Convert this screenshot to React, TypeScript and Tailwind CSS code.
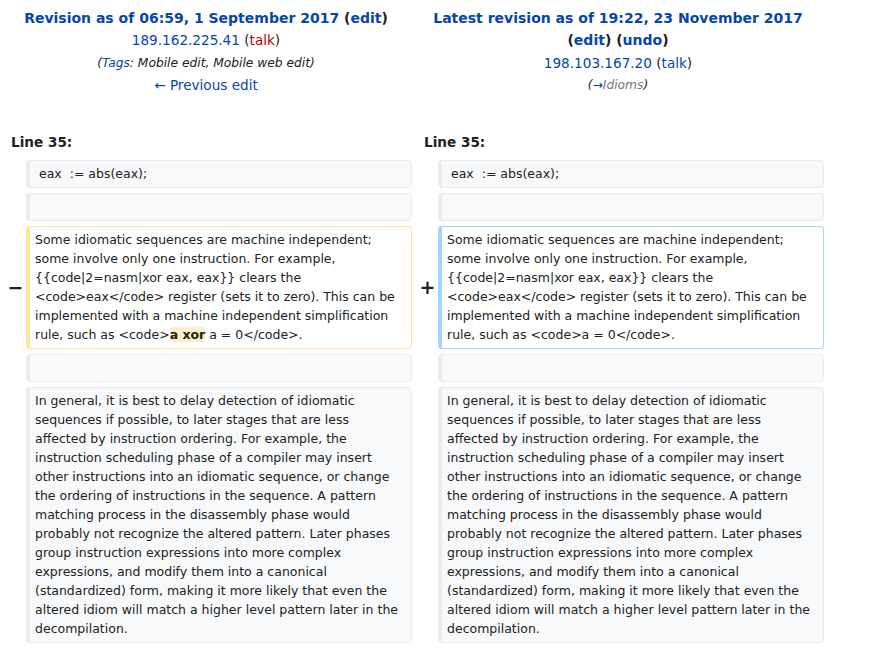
const link = "text-[#0645ad]";

const para1 =
  "Some idiomatic sequences are machine independent; some involve only one instruction. For example, {{code|2=nasm|xor eax, eax}} clears the <code>eax</code> register (sets it to zero). This can be implemented with a machine independent simplification rule, such as <code>";

const para2 =
  "In general, it is best to delay detection of idiomatic sequences if possible, to later stages that are less affected by instruction ordering. For example, the instruction scheduling phase of a compiler may insert other instructions into an idiomatic sequence, or change the ordering of instructions in the sequence. A pattern matching process in the disassembly phase would probably not recognize the altered pattern. Later phases group instruction expressions into more complex expressions, and modify them into a canonical (standardized) form, making it more likely that even the altered idiom will match a higher level pattern later in the decompilation.";

function Box({ kind, children }: { kind: "ctx" | "del" | "add"; children?: React.ReactNode }) {
  const styles = {
    ctx: "bg-[#f8f9fa] border-[#eaecf0]",
    del: "bg-white border-[#ffe49c]",
    add: "bg-white border-[#a3d3ff]",
  };
  return (
    <div
      className={`${styles[kind]} border border-l-4 rounded-[4px] pl-[5px] pr-[10px] py-[3.5px] min-h-[28px] text-[12.5px] leading-[19px] text-[#222] break-words whitespace-pre-wrap`}
    >
      {children}
    </div>
  );
}

function Marker({ sign }: { sign?: string }) {
  return (
    <div className="flex items-center justify-center pl-[5px] text-[19px] font-bold text-[#222]">
      {sign}
    </div>
  );
}

export default function App() {
  return (
    <div className="w-[874px] h-[648px] overflow-hidden bg-white text-[#222]" style={{ fontFamily: '"DejaVu Sans", sans-serif' }}>
      <div className="w-[824px]">
        <div className="grid grid-cols-2 text-center pt-[7px] leading-[22.4px]">
          <div>
            <div className="text-[14px] font-bold">
              <span className={link}>Revision as of 06:59, 1 September 2017</span>{" "}
              (<span className={link}>edit</span>)
            </div>
            <div className="text-[13.6px]">
              <span className={link}>189.162.225.41</span> (<span className="text-[#ba0000]">talk</span>)
            </div>
            <div className="text-[12.25px] italic">
              (<span className={link}>Tags</span>: Mobile edit, Mobile web edit)
            </div>
            <div className={`text-[13.6px] ${link}`}>← Previous edit</div>
          </div>
          <div>
            <div className="text-[14px] font-bold">
              <span className={link}>Latest revision as of 19:22, 23 November 2017</span>
            </div>
            <div className="text-[14px] font-bold">
              (<span className={link}>edit</span>) (<span className={link}>undo</span>)
            </div>
            <div className="text-[13.6px]">
              <span className={link}>198.103.167.20</span> (<span className={link}>talk</span>)
            </div>
            <div className="text-[12.25px] italic">
              (<span className="text-[#72777d]">
                <span className={link}>→</span>Idioms
              </span>)
            </div>
          </div>
        </div>

        <div className="grid grid-cols-2 mt-[35px] mb-[8px] text-[13.6px] font-bold leading-[20px]">
          <div className="pl-[11px]">Line 35:</div>
          <div className="pl-[12px]">Line 35:</div>
        </div>

        <div className="grid grid-cols-[26px_1fr_26px_1fr] gap-y-[5px]">
          <Marker />
          <Box kind="ctx">{" eax  := abs(eax);"}</Box>
          <Marker />
          <Box kind="ctx">{" eax  := abs(eax);"}</Box>

          <Marker />
          <Box kind="ctx" />
          <Marker />
          <Box kind="ctx" />

          <Marker sign="−" />
          <Box kind="del">
            {para1}
            <span className="font-bold bg-[#feeec8] rounded-[3px]">a xor</span>
            {" a = 0</code>."}
          </Box>
          <Marker sign="+" />
          <Box kind="add">{para1 + "a = 0</code>."}</Box>

          <Marker />
          <Box kind="ctx" />
          <Marker />
          <Box kind="ctx" />

          <Marker />
          <Box kind="ctx">{para2}</Box>
          <Marker />
          <Box kind="ctx">{para2}</Box>
        </div>
      </div>
    </div>
  );
}
